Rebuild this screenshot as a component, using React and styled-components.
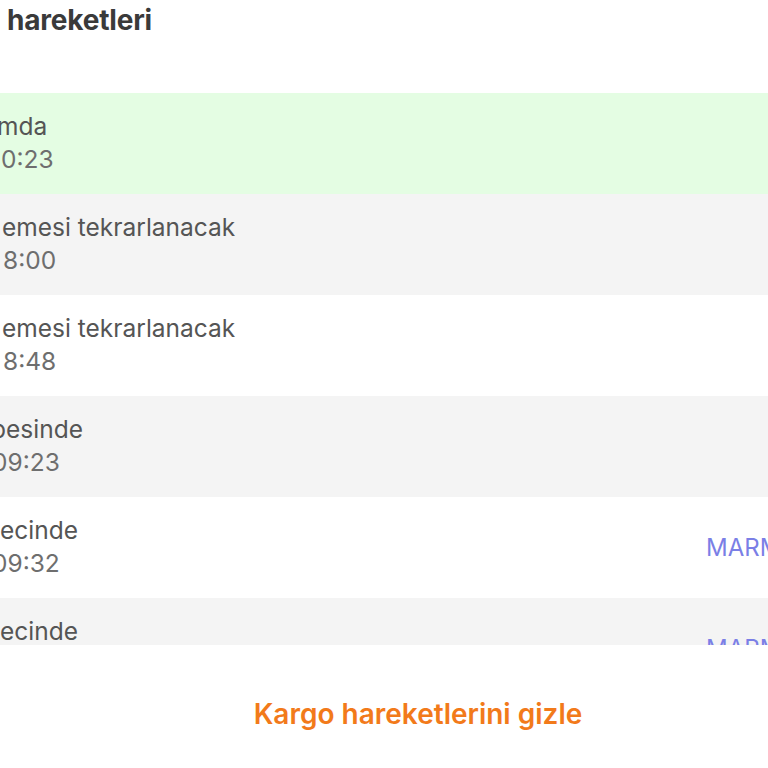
import React from "react";
import styled, { createGlobalStyle } from "styled-components";

const GlobalStyle = createGlobalStyle`
  html, body {
    margin: 0;
    padding: 0;
    background: #fff;
    font-family: Inter, "Noto Sans", "Liberation Sans", sans-serif;
    overflow: hidden;
  }
`;

// satırlar: görünen metin parçaları
const moves = [
  { status: "mda", time: "0:23", statusShift: -3, timeShift: 1, tone: "green" },
  { status: "emesi tekrarlanacak", time: "8:00", statusShift: 2, timeShift: 3, tone: "gray" },
  { status: "emesi tekrarlanacak", time: "8:48", statusShift: 2, timeShift: 3, tone: "white" },
  { status: "pesinde", time: "09:23", statusShift: -9, timeShift: -8, tone: "gray" },
  { status: "ecinde", time: "09:32", statusShift: 0, timeShift: -8, tone: "white", place: "MARMARA" },
  { status: "ecinde", time: "09:41", statusShift: 0, timeShift: -8, tone: "gray", place: "MARMARA" },
];

export default function App() {
  return (
    <Page>
      <GlobalStyle />
      <HeaderTitle>hareketleri</HeaderTitle>
      <MoveList>
        {moves.map((el, i) => (
          <MoveRow key={i} tone={el.tone}>
            <MoveInfo>
              <MoveStatus shift={el.statusShift}>{el.status}</MoveStatus>
              <MoveTime shift={el.timeShift}>{el.time}</MoveTime>
            </MoveInfo>
            {el.place ? <MovePlace>{el.place}</MovePlace> : null}
          </MoveRow>
        ))}
      </MoveList>
      <ToggleArea>
        <ToggleBtn>Kargo hareketlerini gizle</ToggleBtn>
      </ToggleArea>
    </Page>
  );
}

const Page = styled.div`
  width: 768px;
  height: 768px;
  display: flex;
  flex-direction: column;
  overflow: hidden;
`;

const HeaderTitle = styled.h2`
  margin: 2px 0 0 7px;
  height: 91px;
  font-size: 28px;
  line-height: 36px;
  font-weight: 700;
  color: #3a3a3a;
  letter-spacing: -0.2px;
`;

const MoveList = styled.div`
  height: 552px;
  overflow: hidden;
  display: flex;
  flex-direction: column;
`;

const rowColors = {
  green: "#e4fde3",
  gray: "#f4f4f4",
  white: "#ffffff",
};

const MoveRow = styled.div`
  flex: 0 0 auto;
  display: flex;
  align-items: center;
  justify-content: space-between;
  padding: 17px 0 18px;
  background: ${(props) => rowColors[props.tone]};
`;

const MoveInfo = styled.div`
  display: flex;
  flex-direction: column;
`;

const MoveStatus = styled.span`
  font-size: 24.5px;
  line-height: 33px;
  color: #555;
  margin-left: ${(props) => props.shift}px;
  white-space: nowrap;
`;

const MoveTime = styled(MoveStatus)`
  color: #6e6e6e;
`;

const MovePlace = styled.span`
  font-size: 24px;
  color: #7b7fe6;
  width: 62px;
  overflow: hidden;
  white-space: nowrap;
`;

const ToggleArea = styled.div`
  flex: 1;
  display: flex;
  align-items: center;
  justify-content: center;
  padding-left: 68px;
  padding-top: 14px;
`;

const ToggleBtn = styled.button`
  background: none;
  border: none;
  padding: 0;
  font-family: inherit;
  font-size: 28px;
  font-weight: 600;
  color: #f27a1a;
  cursor: pointer;
`;
